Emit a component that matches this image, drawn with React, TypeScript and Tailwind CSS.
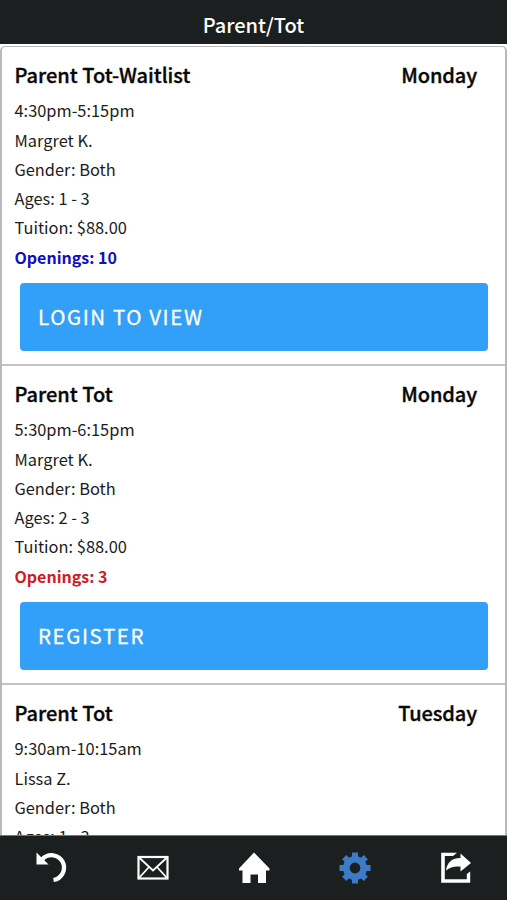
const classes = [
  {
    name: "Parent Tot-Waitlist",
    day: "Monday",
    time: "4:30pm-5:15pm",
    teacher: "Margret K.",
    gender: "Both",
    ages: "1 - 3",
    tuition: "$88.00",
    openings: 10,
    action: "LOGIN TO VIEW",
  },
  {
    name: "Parent Tot",
    day: "Monday",
    time: "5:30pm-6:15pm",
    teacher: "Margret K.",
    gender: "Both",
    ages: "2 - 3",
    tuition: "$88.00",
    openings: 3,
    action: "REGISTER",
  },
  {
    name: "Parent Tot",
    day: "Tuesday",
    time: "9:30am-10:15am",
    teacher: "Lissa Z.",
    gender: "Both",
    ages: "1 - 3",
  },
];

type ClassInfo = (typeof classes)[number];

const ClassCard = ({ item }: { item: ClassInfo }) => {
  return (
    <div className="h-[319px] shrink-0 border-b-2 border-[#c3c3c5] pl-[12.5px] pr-[17px] pt-[13px]">
      <div className="flex justify-between pr-[11px] text-[20px] leading-[30px] font-medium text-[#080808] [-webkit-text-stroke:0.35px_#080808]">
        <h2>{item.name}</h2>
        <p className="tracking-[-0.1px]">{item.day}</p>
      </div>
      <div className="mt-[6.8px] text-[16.4px] leading-[29.3px] text-[#1c1c1c]">
        <p>{item.time}</p>
        <p>{item.teacher}</p>
        <p>Gender: {item.gender}</p>
        <p>Ages: {item.ages}</p>
        {item.tuition && <p>Tuition: {item.tuition}</p>}
        {item.openings && (
          <p className={item.openings > 5 ? "text-[16px] font-bold text-[#1010b8]" : "text-[16px] font-bold text-[#d01c20]"}>
            Openings: {item.openings}
          </p>
        )}
      </div>
      {item.action && (
        <button className="mt-[11.4px] ml-[5.5px] flex h-[68px] w-[468px] items-center rounded-[4px] bg-[#329ff8] pb-[2px] pl-[18px] text-[20.5px] tracking-[1.6px] text-white [-webkit-text-stroke:0.3px_#fff]">
          {item.action}
        </button>
      )}
    </div>
  );
};

const TabBar = () => {
  return (
    <nav className="flex h-[65px] shrink-0 items-start justify-around border-t border-[#70767a] bg-[#1b1f20] pt-[14px] pl-px text-white">
      <svg className="h-9 w-9" viewBox="0 0 36 36" fill="none">
        <path d="M8.500 9A12.500 12.500 0 1 1 19.500 30" stroke="currentColor" strokeWidth="4.300" />
        <path d="M2.500 2.500V14.500H14.500Z" fill="currentColor" />
      </svg>
      <svg className="h-9 w-9" viewBox="0 0 36 36" fill="none" stroke="currentColor" strokeWidth="2.200">
        <rect x="3.500" y="7" width="29" height="21.500" />
        <path d="M4 7.500L18 20.500L32 7.500M4 28L14 17M32 28L22 17" strokeWidth="1.800" />
      </svg>
      <svg className="h-9 w-9" viewBox="0 0 36 36" fill="currentColor">
        <path d="M18 2.500L33.500 18.500V20.500H30V33H22V24.500H14.500V33H6.500V20.500H3V18.500Z" />
      </svg>
      <svg className="h-9 w-9 text-[#3c7bc8]" viewBox="0 0 36 36" fill="none" stroke="currentColor">
        <circle cx="18" cy="18" r="8.700" strokeWidth="6.600" />
        <path d="M18 2.500V9M18 27V33.500M2.500 18H9M27 18H33.500M7.200 7.200L12 12M24 24L28.800 28.800M28.800 7.200L24 12M12 24L7.200 28.800" strokeWidth="6" />
      </svg>
      <svg className="h-9 w-9" viewBox="0 0 36 36" fill="none">
        <path d="M3.200 2.700H19L15 6H6.800V29.300H28.800V24L32.200 21.500V32.700H3.200Z" fill="currentColor" />
        <path d="M8 20.500C9 12.500 14 8 22.500 8V3.500L33 13L22.500 21.500V16.500C16 16 12 17 8 20.500Z" fill="currentColor" />
      </svg>
    </nav>
  );
};

const App = () => {
  return (
    <div className="flex h-[900px] w-[507px] flex-col overflow-hidden bg-white font-['Noto_Sans_CJK_SC',sans-serif]">
      <header className="flex h-[44px] shrink-0 items-center justify-center bg-[#1b1f20] pt-[5px] text-[20px] font-medium text-white">
        Parent/Tot
      </header>
      <main className="mt-[1.5px] flex min-h-0 flex-1 flex-col overflow-hidden rounded-t-[5px] border-x-2 border-t border-[#b9b9bd]">
        {classes.map((item, i) => (
          <ClassCard key={i} item={item} />
        ))}
      </main>
      <TabBar />
    </div>
  );
};

export default App;
